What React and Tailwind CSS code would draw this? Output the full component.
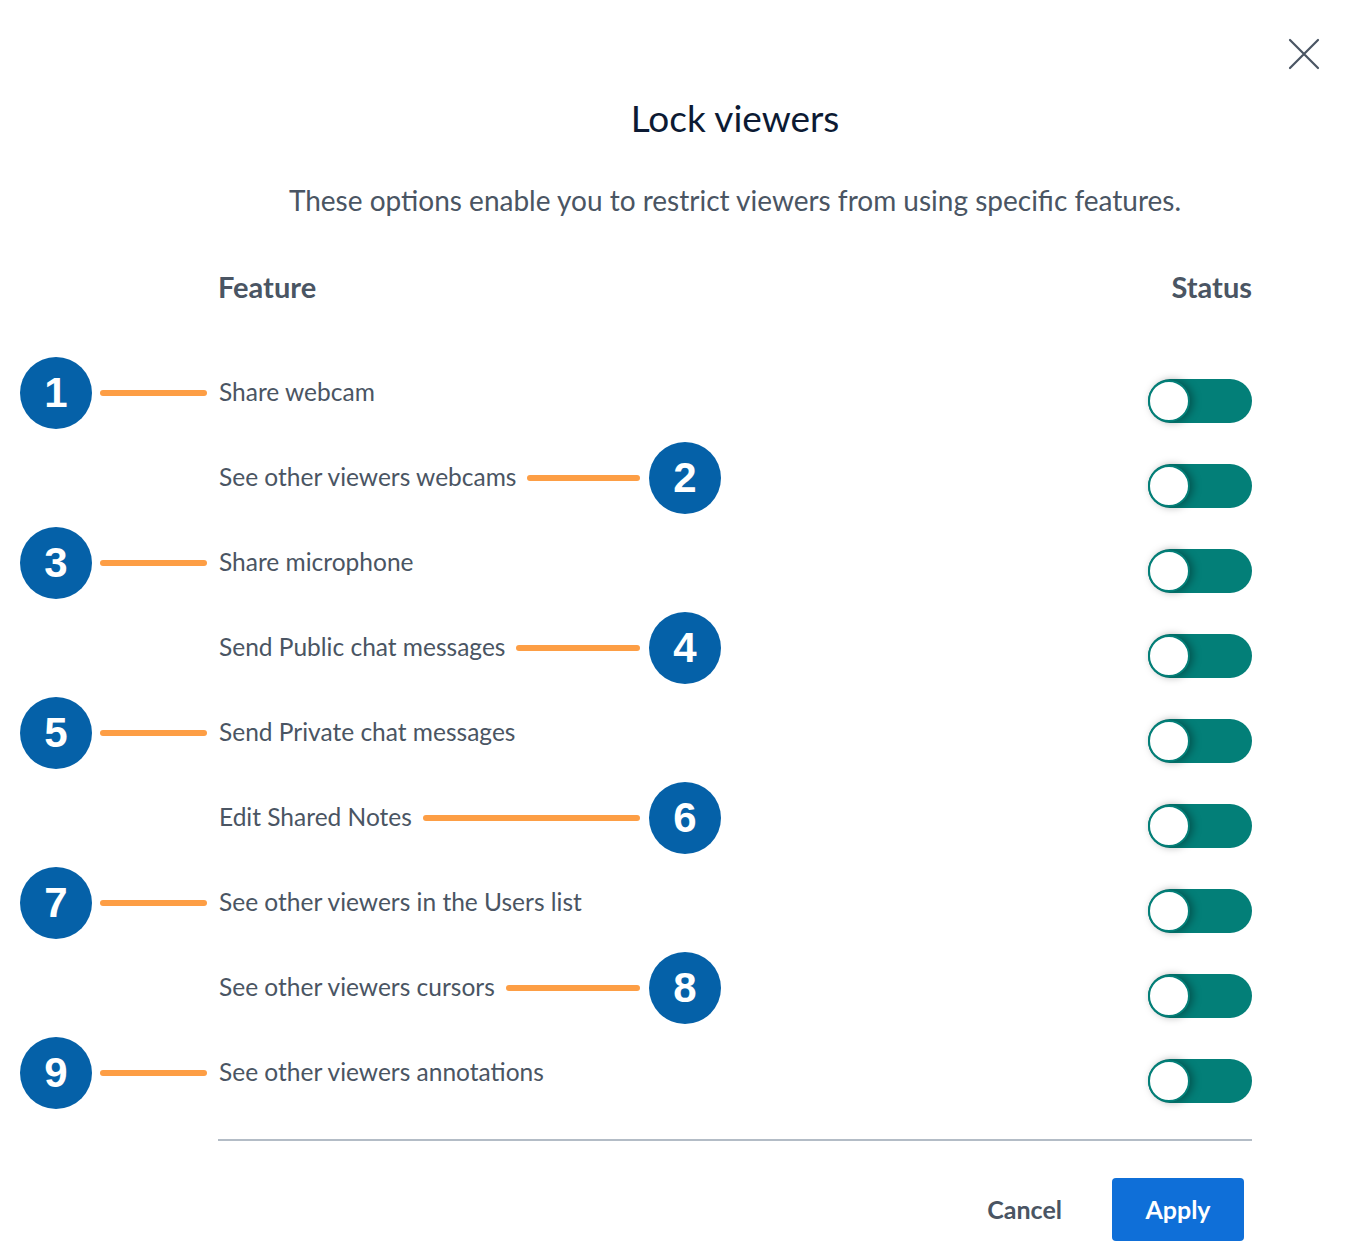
const FONT = { fontFamily: 'Lato, "Open Sans", sans-serif' };

const ROWS = [
  { label: 'Share webcam', badge: 1, side: 'left' },
  { label: 'See other viewers webcams', badge: 2, side: 'right' },
  { label: 'Share microphone', badge: 3, side: 'left' },
  { label: 'Send Public chat messages', badge: 4, side: 'right' },
  { label: 'Send Private chat messages', badge: 5, side: 'left' },
  { label: 'Edit Shared Notes', badge: 6, side: 'right' },
  { label: 'See other viewers in the Users list', badge: 7, side: 'left' },
  { label: 'See other viewers cursors', badge: 8, side: 'right' },
  { label: 'See other viewers annotations', badge: 9, side: 'left' },
];

function Badge({ n }) {
  return (
    <div
      className="w-[72px] h-[72px] shrink-0 rounded-full bg-[#0561a8] text-white flex items-center justify-center text-[42px] font-bold"
      style={{ fontFamily: '"Liberation Sans", Arial, sans-serif' }}
    >
      {n}
    </div>
  );
}

function Toggle() {
  return (
    <div className="relative w-[104px] h-[44px] mt-[16px] rounded-full bg-[#037f78] shrink-0">
      <div className="absolute left-0 top-px w-[42px] h-[42px] rounded-full bg-white border-2 border-[#037f78] shadow-[3px_0_8px_rgba(0,0,0,0.35)]" />
    </div>
  );
}

export default function App() {
  return (
    <div className="relative w-[1348px] h-[1256px] bg-white overflow-hidden" style={FONT}>
      <button className="absolute top-[38px] right-[28px] w-[32px] h-[32px] text-[#4a5563]" aria-label="Close">
        <svg viewBox="0 0 32 32" className="w-full h-full" fill="none" stroke="currentColor" strokeWidth="2.2" strokeLinecap="round">
          <path d="M2 2 L30 30 M30 2 L2 30" />
        </svg>
      </button>

      <div className="pl-[20px] pr-[96px] pt-[96px]">
        <div className="ml-[198px]">
          <h1 className="text-center text-[37px] leading-[44px] text-[#0c1a33]">Lock viewers</h1>
          <p className="mt-[42px] text-center text-[28px] leading-[36px] text-[#4a5563]">
            These options enable you to restrict viewers from using specific features.
          </p>
          <div className="mt-[51px] flex justify-between text-[29px] leading-[36px] font-bold text-[#4a5563]">
            <span>Feature</span>
            <span>Status</span>
          </div>
        </div>

        <div className="mt-[45px] flex flex-col">
          {ROWS.map((r) => (
            <div key={r.badge} className="h-[85px] flex items-center">
              <div className="w-[199px] shrink-0 flex items-center">
                {r.side === 'left' && (
                  <>
                    <Badge n={r.badge} />
                    <div className="ml-[8px] w-[107px] h-[6px] rounded-full bg-[#fd9e45]" />
                  </>
                )}
              </div>
              <div className="w-[502px] shrink-0 flex items-center">
                <span className="text-[24.5px] text-[#4a5563] whitespace-nowrap">{r.label}</span>
                {r.side === 'right' && (
                  <>
                    <div className="flex-1 ml-[11px] mr-[9px] h-[6px] rounded-full bg-[#fd9e45]" />
                    <Badge n={r.badge} />
                  </>
                )}
              </div>
              <div className="flex-1" />
              <Toggle />
            </div>
          ))}
        </div>

        <div className="ml-[198px] mt-[24px] h-[2px] bg-[#b3bcc6]" />

        <div className="ml-[198px] mt-[37px] flex justify-end items-center pr-[8px]">
          <button className="text-[25px] font-bold text-[#4a5563] mr-[50px]">Cancel</button>
          <button className="w-[132px] h-[63px] rounded-[4px] bg-[#0f6fd8] text-white text-[25px] font-bold">Apply</button>
        </div>
      </div>
    </div>
  );
}
